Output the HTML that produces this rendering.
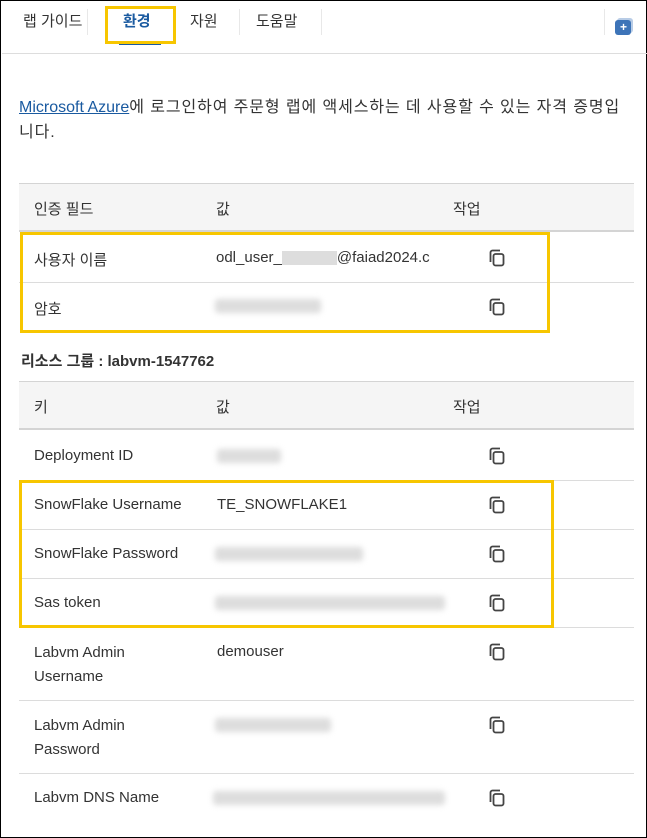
<!DOCTYPE html>
<html><head><meta charset="utf-8"><style>
*{margin:0;padding:0;box-sizing:border-box}
body{width:647px;height:838px;overflow:hidden;background:#fff;font-family:"Liberation Sans","Noto Sans CJK KR",sans-serif;color:#333;font-size:15px;position:relative;border:1px solid #000}
.a{position:absolute;white-space:nowrap}
.tab{top:9px;font-size:15px;color:#333}
.sep{position:absolute;top:8px;width:1px;height:26px;background:#e8e8e8}
.hd{position:absolute;left:18px;width:615px;height:49px;background:#f5f5f5;border-top:1px solid #d4d4d4;border-bottom:2px solid #d4d4d4}
.rl{position:absolute;left:18px;width:615px;height:1px;background:#dcdcdc}
.blur{position:absolute;height:14px;background:#ddd;filter:blur(3px);border-radius:3px}
.yb{position:absolute;border:3px solid #f7c600}
.cp{position:absolute;width:18px;height:18px}
</style></head><body>
<div class="a tab" style="left:22px">랩 가이드</div>
<div class="a tab" style="left:122px;color:#1a5aa0;font-weight:bold">환경</div>
<div style="position:absolute;left:118px;top:42px;width:42px;height:2px;background:#1a5aa0"></div>
<div class="sep" style="left:86px"></div>
<div class="sep" style="left:238px"></div>
<div class="sep" style="left:320px"></div>
<div class="sep" style="left:603px"></div>
<div class="a tab" style="left:189px">자원</div>
<div class="a tab" style="left:255px">도움말</div>
<div style="position:absolute;left:614px;top:19px;width:16px;height:15px;background:#3d74b8;border-radius:3px;box-shadow:2px -2px 0 #b8cce6"></div>
<div class="a" style="left:619px;top:19px;color:#fff;font-size:12px;font-weight:bold">+</div>
<div class="yb" style="left:104px;top:5px;width:71px;height:38px"></div>
<div style="position:absolute;left:1px;top:52px;width:645px;height:1px;background:#ddd"></div>
<div class="a" style="left:18px;top:94px;font-size:16px;letter-spacing:0.9px;line-height:25px;color:#333"><span style="color:#1a5aa0;text-decoration:underline;letter-spacing:0">Microsoft Azure</span>에 로그인하여 주문형 랩에 액세스하는 데 사용할 수 있는 자격 증명입<br>니다.</div>

<div class="hd" style="top:182px"></div>
<div class="a" style="left:33px;top:197px">인증 필드</div><div class="a" style="left:215px;top:197px">값</div><div class="a" style="left:452px;top:197px">작업</div>
<div class="a" style="left:33px;top:248px">사용자 이름</div><div class="a" style="left:215px;top:248px">odl_user_<span style="display:inline-block;width:55px;height:14px;background:#ddd;vertical-align:middle"></span>@faiad2024.c</div>
<div class="rl" style="top:281px"></div>
<div class="a" style="left:33px;top:297px">암호</div><div class="blur" style="left:214px;top:298px;width:106px"></div>
<div class="a" style="left:20px;top:349px;font-weight:bold;font-size:15px">리소스 그룹 : labvm-1547762</div>

<div class="hd" style="top:380px"></div>
<div class="a" style="left:33px;top:395px">키</div><div class="a" style="left:215px;top:395px">값</div><div class="a" style="left:452px;top:395px">작업</div>
<div class="a" style="left:33px;top:446px">Deployment ID</div><div class="blur" style="left:216px;top:448px;width:64px"></div>
<div class="rl" style="top:479px"></div>
<div class="a" style="left:33px;top:495px">SnowFlake Username</div><div class="a" style="left:216px;top:495px">TE_SNOWFLAKE1</div>
<div class="rl" style="top:528px"></div>
<div class="a" style="left:33px;top:544px">SnowFlake Password</div><div class="blur" style="left:214px;top:546px;width:148px"></div>
<div class="rl" style="top:577px"></div>
<div class="a" style="left:33px;top:593px">Sas token</div><div class="blur" style="left:214px;top:595px;width:230px"></div>
<div class="rl" style="top:626px"></div>
<div class="a" style="left:33px;top:640px;line-height:24px">Labvm Admin<br>Username</div><div class="a" style="left:216px;top:642px">demouser</div>
<div class="rl" style="top:699px"></div>
<div class="a" style="left:33px;top:713px;line-height:24px">Labvm Admin<br>Password</div><div class="blur" style="left:214px;top:717px;width:116px"></div>
<div class="rl" style="top:772px"></div>
<div class="a" style="left:33px;top:788px">Labvm DNS Name</div><div class="blur" style="left:212px;top:790px;width:232px"></div>

<div class="yb" style="left:19px;top:231px;width:530px;height:101px"></div>
<div class="yb" style="left:18px;top:479px;width:535px;height:148px"></div>

<svg width="0" height="0" style="position:absolute"><defs><g id="c"><rect x="5.5" y="5" width="10" height="11.5" rx="2" fill="none" stroke="#444" stroke-width="1.8"/><path d="M2.5 13V3.5a2 2 0 0 1 2-2H12" fill="none" stroke="#444" stroke-width="1.8"/></g></defs></svg>
<svg class="cp" style="left:487px;top:248px"><use href="#c"/></svg>
<svg class="cp" style="left:487px;top:297px"><use href="#c"/></svg>
<svg class="cp" style="left:487px;top:446px"><use href="#c"/></svg>
<svg class="cp" style="left:487px;top:495px"><use href="#c"/></svg>
<svg class="cp" style="left:487px;top:544px"><use href="#c"/></svg>
<svg class="cp" style="left:487px;top:593px"><use href="#c"/></svg>
<svg class="cp" style="left:487px;top:642px"><use href="#c"/></svg>
<svg class="cp" style="left:487px;top:715px"><use href="#c"/></svg>
<svg class="cp" style="left:487px;top:788px"><use href="#c"/></svg>
</body></html>
